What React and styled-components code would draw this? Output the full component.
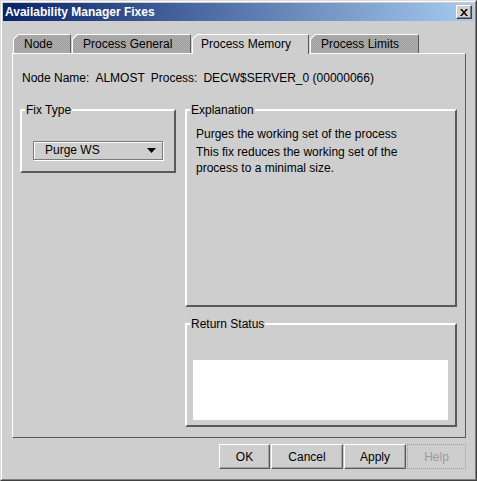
import React from 'react';
import styled, { createGlobalStyle } from 'styled-components';

const Global = createGlobalStyle`
  html, body { margin: 0; padding: 0; background: #cecece; }
  body { font-family: "Liberation Sans", Arial, sans-serif; font-size: 12px; color: #000; }
`;

const Window = styled.div`
  width: 477px;
  height: 481px;
  box-sizing: border-box;
  background: #cecece;
  border: 1px solid;
  border-color: #dcdcdc #404040 #404040 #dcdcdc;
  display: flex;
`;

const Frame = styled.div`
  flex: 1;
  display: flex;
  flex-direction: column;
  border: 1px solid;
  border-color: #ffffff #808080 #808080 #ffffff;
  padding: 1px;
`;

const TitleBar = styled.div`
  height: 18px;
  flex: none;
  display: flex;
  align-items: center;
  justify-content: space-between;
  padding: 0 2px;
  background: linear-gradient(to right, #0a246a, #a6caf0);
`;

const Title = styled.span`
  color: #fff;
  font-weight: bold;
  font-size: 12px;
  line-height: 18px;
`;

const CloseButton = styled.div`
  width: 16px;
  height: 14px;
  box-sizing: border-box;
  background: #d4d0c8;
  border: 1px solid;
  border-color: #ffffff #404040 #404040 #ffffff;
  box-shadow: inset -1px -1px 0 #808080;
  display: flex;
  align-items: center;
  justify-content: center;
`;

const Body = styled.div`
  flex: 1;
  display: flex;
  flex-direction: column;
  padding: 13px 8px 0 9px;
`;

const TabRow = styled.div`
  display: flex;
  align-items: flex-end;
  gap: 1px;
  margin-left: 1px;
  height: 19px;
`;

const stipple = 'repeating-conic-gradient(#9c9c9c 0% 25%, #b2b2b2 0% 50%) 0 0 / 2px 2px';

const Tab = styled.div`
  box-sizing: border-box;
  width: ${p => p.$w}px;
  height: ${p => (p.$active ? 20 : 19)}px;
  margin-bottom: ${p => (p.$active ? -1 : 0)}px;
  position: relative;
  z-index: ${p => (p.$active ? 1 : 0)};
  padding: 2px 0 0 ${p => (p.$active ? 8 : 10)}px;
  border-top: 1px solid #fff;
  border-left: 1px solid #fff;
  border-right: 1px solid #5a5a5a;
  clip-path: polygon(5px 0, 100% 0, 100% 100%, 0 100%, 0 5px);
  background:
    linear-gradient(135deg, transparent 3.1px, #fff 3.1px, #fff 4.4px, transparent 4.4px) 0 0 / 8px 8px no-repeat,
    ${p => (p.$active ? '#cecece' : stipple)};
  background-origin: border-box;
  font-size: 12px;
  line-height: 14px;
  white-space: nowrap;
`;

const Panel = styled.div`
  height: 385px;
  box-sizing: border-box;
  flex: none;
  border: 1px solid;
  border-color: #fff #5a5a5a #5a5a5a #fff;
  padding-top: 17px;
  display: flex;
  flex-direction: column;
`;

const InfoLine = styled.div`
  display: flex;
  gap: 6px;
  margin-left: 9px;
  line-height: 14px;
  white-space: nowrap;
`;

const GroupRow = styled.div`
  display: flex;
  align-items: flex-start;
  gap: 9px;
  margin: 18px 0 0 7px;
`;

const Column = styled.div`
  display: flex;
  flex-direction: column;
  gap: 10px;
`;

const Group = styled.fieldset`
  margin: 0;
  padding: 0;
  min-width: 0;
  box-sizing: border-box;
  width: ${p => p.$w}px;
  height: ${p => p.$h}px;
  border: 2px solid;
  border-color: #fff #5a5a5a #5a5a5a #fff;
`;

const Legend = styled.legend`
  padding: 0 1px;
  margin-left: 3px;
  font-size: 12px;
  line-height: 14px;
`;

const Combo = styled.div`
  box-sizing: border-box;
  width: 130px;
  height: 19px;
  margin: 24px 0 0 11px;
  border: 1px solid #7a7a7a;
  box-shadow: 1px 1px 0 #fff, inset 1px 1px 0 #fff;
  display: flex;
  align-items: center;
  justify-content: space-between;
  padding: 0 6px 0 11px;
  line-height: 17px;
`;

const Explanation = styled.div`
  padding: 9px 0 0 9px;
  line-height: 16px;
`;

const Para = styled.p`
  margin: 0 0 2px;
`;

const StatusBox = styled.div`
  height: 60px;
  margin: 29px 7px 0 6px;
  background: #fff;
`;

const ButtonRow = styled.div`
  display: flex;
  justify-content: flex-end;
  gap: 1px;
  margin-top: 6px;
`;

const Button = styled.button`
  box-sizing: border-box;
  width: ${p => p.$w}px;
  height: 25px;
  padding: 0;
  font-family: inherit;
  font-size: 12px;
  color: #000;
  background: #cecece;
  border: 1px solid;
  border-color: #fff #5a5a5a #5a5a5a #fff;
  box-shadow: inset -1px -1px 0 #a0a0a0;
  &:disabled {
    color: #9c9c9c;
    border: 1px dotted #9c9c9c;
    box-shadow: none;
  }
`;

export default function App() {
  return (
    <>
      <Global />
      <Window>
        <Frame>
          <TitleBar>
            <Title>Availability Manager Fixes</Title>
            <CloseButton>
              <svg width="8" height="7" viewBox="0 0 8 7">
                <path d="M0 0h2l2 2.5L6 0h2L5 3.5 8 7H6L4 4.5 2 7H0l3-3.5z" fill="#000" />
              </svg>
            </CloseButton>
          </TitleBar>
          <Body>
            <TabRow>
              <Tab $w={58}>Node</Tab>
              <Tab $w={119}>Process General</Tab>
              <Tab $w={117} $active>Process Memory</Tab>
              <Tab $w={109}>Process Limits</Tab>
            </TabRow>
            <Panel>
              <InfoLine>
                <span>Node Name:</span>
                <span>ALMOST</span>
                <span>Process:</span>
                <span>DECW$SERVER_0 (00000066)</span>
              </InfoLine>
              <GroupRow>
                <Group $w={156} $h={70}>
                  <Legend>Fix Type</Legend>
                  <Combo>
                    <span>Purge WS</span>
                    <svg width="9" height="5" viewBox="0 0 9 5">
                      <path d="M0 0h9L4.5 5z" fill="#000" />
                    </svg>
                  </Combo>
                </Group>
                <Column>
                  <Group $w={272} $h={204}>
                    <Legend>Explanation</Legend>
                    <Explanation>
                      <Para>Purges the working set of the process</Para>
                      <Para>
                        This fix reduces the working set of the
                        <br />
                        process to a minimal size.
                      </Para>
                    </Explanation>
                  </Group>
                  <Group $w={272} $h={110}>
                    <Legend>Return Status</Legend>
                    <StatusBox />
                  </Group>
                </Column>
              </GroupRow>
            </Panel>
            <ButtonRow>
              <Button $w={51}>OK</Button>
              <Button $w={72}>Cancel</Button>
              <Button $w={62}>Apply</Button>
              <Button $w={59} disabled>Help</Button>
            </ButtonRow>
          </Body>
        </Frame>
      </Window>
    </>
  );
}
